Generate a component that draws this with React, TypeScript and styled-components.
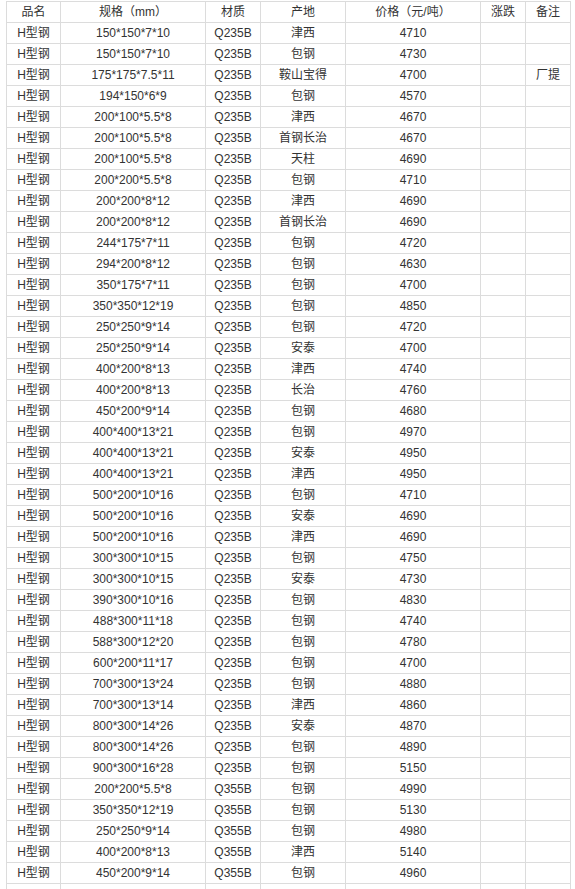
import React from 'react';
import styled, { createGlobalStyle } from 'styled-components';

const GlobalStyle = createGlobalStyle`
	html, body {
		margin: 0;
		padding: 0;
		background: #fff;
	}
	body {
		font-family: 'Liberation Sans', 'Noto Sans CJK SC', sans-serif;
		font-size: 12px;
		color: #333;
	}
`;

const Page = styled.div`
	padding: 1px 0 0 6px;
`;

const Table = styled.table`
	border-collapse: collapse;
	table-layout: fixed;
	width: 565px;
`;

const Col = styled.col<{ $w: number }>`
	width: ${(p) => p.$w}px;
`;

const HeadCell = styled.th`
	height: 20px;
	padding: 0;
	border: 1px solid #dcdcdc;
	font-weight: normal;
	text-align: center;
	vertical-align: middle;
	line-height: 20px;
	white-space: nowrap;
	overflow: hidden;
`;

const Cell = styled.td`
	height: 20px;
	padding: 0;
	border: 1px solid #dcdcdc;
	text-align: center;
	vertical-align: middle;
	line-height: 20px;
	white-space: nowrap;
	overflow: hidden;
`;

// column line positions in the picture: 6 | 60 | 205 | 260 | 345 | 480 | 525 | 570
const columns: [string, number][] = [
	['品名', 54],
	['规格（mm）', 145],
	['材质', 55],
	['产地', 85],
	['价格（元/吨）', 135],
	['涨跌', 45],
	['备注', 45],
];

// 规格, 材质, 产地, 价格, 备注
const rows: [string, string, string, string, string?][] = [
	['150*150*7*10', 'Q235B', '津西', '4710'],
	['150*150*7*10', 'Q235B', '包钢', '4730'],
	['175*175*7.5*11', 'Q235B', '鞍山宝得', '4700', '厂提'],
	['194*150*6*9', 'Q235B', '包钢', '4570'],
	['200*100*5.5*8', 'Q235B', '津西', '4670'],
	['200*100*5.5*8', 'Q235B', '首钢长治', '4670'],
	['200*100*5.5*8', 'Q235B', '天柱', '4690'],
	['200*200*5.5*8', 'Q235B', '包钢', '4710'],
	['200*200*8*12', 'Q235B', '津西', '4690'],
	['200*200*8*12', 'Q235B', '首钢长治', '4690'],
	['244*175*7*11', 'Q235B', '包钢', '4720'],
	['294*200*8*12', 'Q235B', '包钢', '4630'],
	['350*175*7*11', 'Q235B', '包钢', '4700'],
	['350*350*12*19', 'Q235B', '包钢', '4850'],
	['250*250*9*14', 'Q235B', '包钢', '4720'],
	['250*250*9*14', 'Q235B', '安泰', '4700'],
	['400*200*8*13', 'Q235B', '津西', '4740'],
	['400*200*8*13', 'Q235B', '长治', '4760'],
	['450*200*9*14', 'Q235B', '包钢', '4680'],
	['400*400*13*21', 'Q235B', '包钢', '4970'],
	['400*400*13*21', 'Q235B', '安泰', '4950'],
	['400*400*13*21', 'Q235B', '津西', '4950'],
	['500*200*10*16', 'Q235B', '包钢', '4710'],
	['500*200*10*16', 'Q235B', '安泰', '4690'],
	['500*200*10*16', 'Q235B', '津西', '4690'],
	['300*300*10*15', 'Q235B', '包钢', '4750'],
	['300*300*10*15', 'Q235B', '安泰', '4730'],
	['390*300*10*16', 'Q235B', '包钢', '4830'],
	['488*300*11*18', 'Q235B', '包钢', '4740'],
	['588*300*12*20', 'Q235B', '包钢', '4780'],
	['600*200*11*17', 'Q235B', '包钢', '4700'],
	['700*300*13*24', 'Q235B', '包钢', '4880'],
	['700*300*13*14', 'Q235B', '津西', '4860'],
	['800*300*14*26', 'Q235B', '安泰', '4870'],
	['800*300*14*26', 'Q235B', '包钢', '4890'],
	['900*300*16*28', 'Q235B', '包钢', '5150'],
	['200*200*5.5*8', 'Q355B', '包钢', '4990'],
	['350*350*12*19', 'Q355B', '包钢', '5130'],
	['250*250*9*14', 'Q355B', '包钢', '4980'],
	['400*200*8*13', 'Q355B', '津西', '5140'],
	['450*200*9*14', 'Q355B', '包钢', '4960'],
];

const App = () => {
	return (
		<>
			<GlobalStyle />
			<Page>
				<Table>
					<colgroup>
						{columns.map(([name, w]) => (
							<Col key={name} $w={w} />
						))}
					</colgroup>
					<thead>
						<tr>
							{columns.map(([name]) => (
								<HeadCell key={name}>{name}</HeadCell>
							))}
						</tr>
					</thead>
					<tbody>
						{rows.map((row, index) => (
							<tr key={index}>
								<Cell>H型钢</Cell>
								<Cell>{row[0]}</Cell>
								<Cell>{row[1]}</Cell>
								<Cell>{row[2]}</Cell>
								<Cell>{row[3]}</Cell>
								<Cell></Cell>
								<Cell>{row[4] || ''}</Cell>
							</tr>
						))}
						<tr>
							{columns.map(([name]) => (
								<Cell key={name} />
							))}
						</tr>
					</tbody>
				</Table>
			</Page>
		</>
	);
};

export default App;
